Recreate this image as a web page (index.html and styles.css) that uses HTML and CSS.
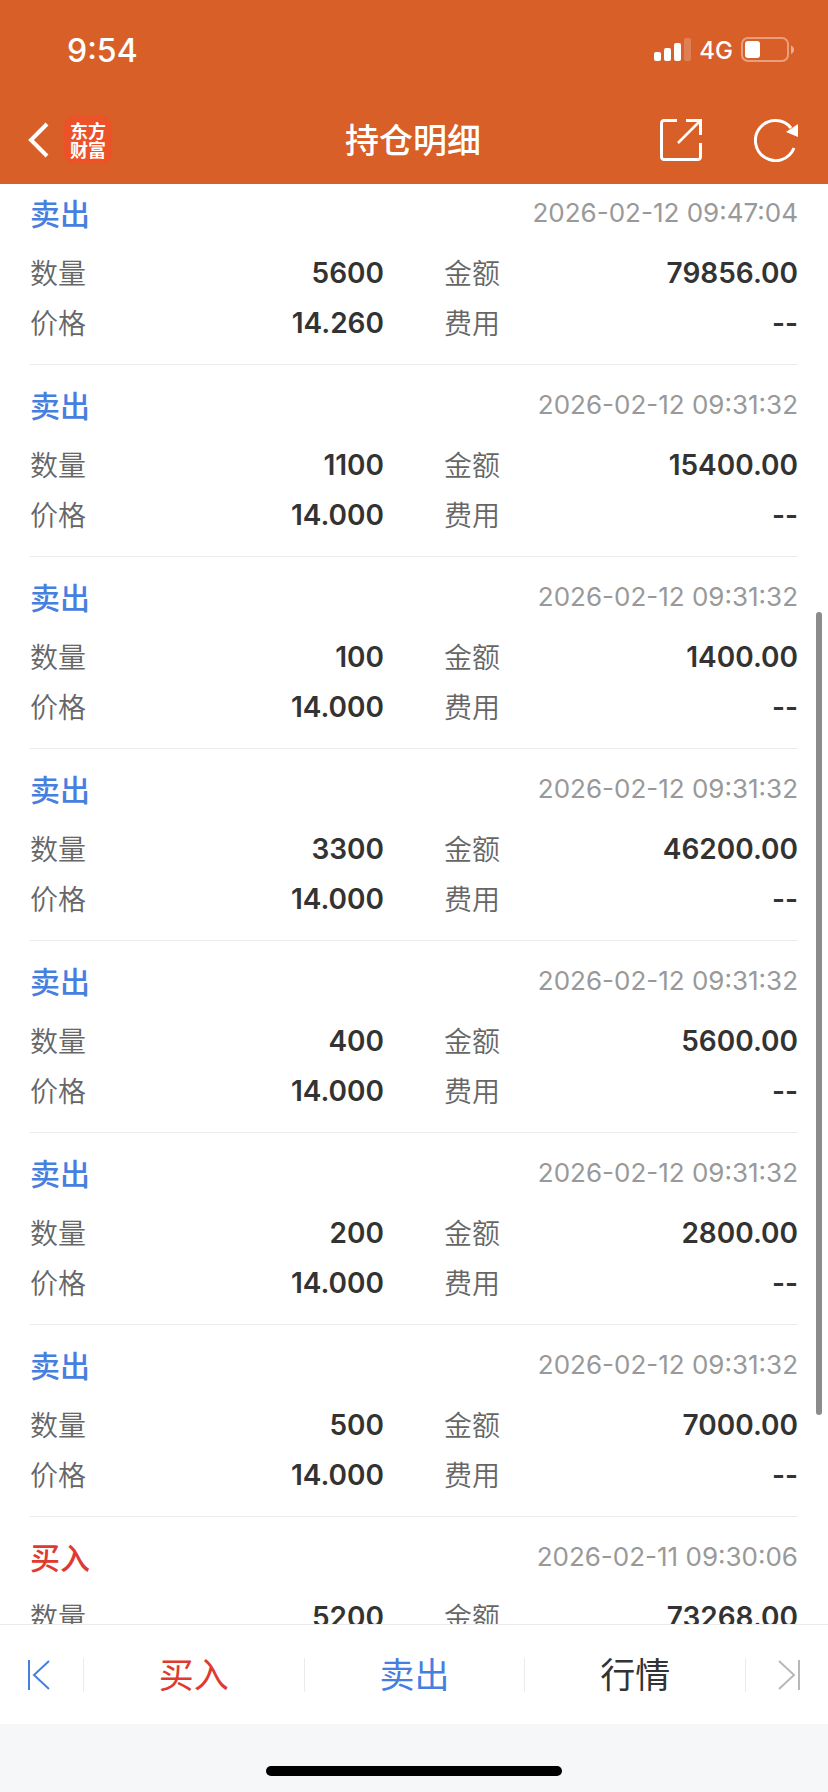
FILE: index.html
```html
<!DOCTYPE html>
<html lang="zh-CN">
<head>
    <meta charset="UTF-8">
    <meta name="viewport" content="width=device-width, initial-scale=1.0">
    <title>持仓明细</title>
    <link rel="stylesheet" href="styles.css">
</head>
<body>
    <header class="header">
        <div class="status-bar">
            <span class="time">9:54</span>
            <div class="status-icons">
                <svg width="37" height="24" viewBox="0 0 37 24" fill="#fff">
                    <rect x="0" y="14" width="7" height="9" rx="2"/>
                    <rect x="10" y="10" width="7" height="13" rx="2"/>
                    <rect x="20" y="5" width="7" height="18" rx="2"/>
                    <rect x="30" y="0" width="7" height="23" rx="2" opacity="0.2"/>
                </svg>
                <span class="network">4G</span>
                <svg width="54" height="26" viewBox="0 0 54 26">
                    <rect x="1" y="1" width="46" height="23" rx="6" fill="none" stroke="#fff" stroke-width="2" opacity="0.4"/>
                    <rect x="4" y="4" width="15" height="17" rx="3" fill="#fff"/>
                    <path d="M50 8.500c4 1.500 4 7 0 8.500z" fill="#fff" opacity="0.5"/>
                </svg>
            </div>
        </div>
        <nav class="nav-bar">
            <div class="nav-side">
                <button type="button" class="icon-btn" aria-label="返回">
                    <svg width="22" height="36" viewBox="0 0 22 36" fill="none" stroke="#fff" stroke-width="4">
                        <path d="M19 2L3 18l16 16"/>
                    </svg>
                </button>
                <a href="#" class="logo"><span>东方</span><span>财富</span></a>
            </div>
            <h1>持仓明细</h1>
            <div class="nav-side nav-right">
                <button type="button" class="icon-btn" aria-label="分享">
                    <svg width="42" height="42" viewBox="0 0 42 42" fill="none" stroke="#fff" stroke-width="3">
                        <path d="M17 1.500H4A2.500 2.500 0 0 0 1.500 4v34A2.500 2.500 0 0 0 4 40.500h34a2.500 2.500 0 0 0 2.500-2.500V24"/>
                        <path d="M26 1.500h14.500V16"/>
                        <path d="M40 2L18 24" stroke-width="2.500"/>
                    </svg>
                </button>
                <button type="button" class="icon-btn" aria-label="刷新">
                    <svg width="44" height="44" viewBox="0 0 44 44" fill="none" stroke="#fff" stroke-width="3">
                        <path d="M40 30A20 20 0 1 1 37 10"/>
                        <path d="M44 6v13L32 14z" fill="#fff" stroke="none"/>
                    </svg>
                </button>
            </div>
        </nav>
    </header>

    <main class="content">
        <ul class="trade-list" id="tradeList"></ul>
        <div class="scrollbar"></div>
    </main>

    <footer class="footer">
        <div class="toolbar">
            <button type="button" class="tool-side" aria-label="上一个">
                <svg width="22" height="30" viewBox="0 0 22 30" fill="none" stroke="#477fe0" stroke-width="2">
                    <path d="M1 0v30"/>
                    <path d="M21 1L6 15l15 14"/>
                </svg>
            </button>
            <button type="button" class="tool-btn buy">买入</button>
            <button type="button" class="tool-btn sell">卖出</button>
            <button type="button" class="tool-btn">行情</button>
            <button type="button" class="tool-side tool-next" aria-label="下一个">
                <svg width="22" height="30" viewBox="0 0 22 30" fill="none" stroke="#b8b8b8" stroke-width="2">
                    <path d="M21 0v30"/>
                    <path d="M1 1l15 14L1 29"/>
                </svg>
            </button>
        </div>
        <div class="home-area"><div class="home-indicator"></div></div>
    </footer>

    <script src="script.js"></script>
</body>
</html>
```
FILE: styles.css
```css
* {
    box-sizing: border-box;
}
body {
    display: flex;
    flex-direction: column;
    height: 100vh;
    margin: 0;
    overflow: hidden;
    font-family: Inter, "Noto Sans CJK SC", sans-serif;
    font-size: 28px;
    color: #333;
    background-color: #fff;
}
button {
    padding: 0;
    border: none;
    background: none;
    font-family: inherit;
    color: inherit;
    cursor: pointer;
}
svg {
    display: block;
}

/* header */
.header {
    flex: none;
    color: #fff;
    background-color: #d85f27;
}
.status-bar {
    display: flex;
    justify-content: space-between;
    align-items: center;
    height: 100px;
    padding: 0 33px 0 67px;
}
.time {
    font-size: 32px;
    font-weight: 500;
}
.status-icons {
    display: flex;
    align-items: center;
    gap: 8px;
}
.network {
    font-size: 24px;
    font-weight: 500;
}
.nav-bar {
    display: flex;
    align-items: center;
    height: 84px;
    padding: 0 30px 4px 28px;
}
.nav-side {
    display: flex;
    flex: 1;
    align-items: center;
    gap: 14px;
}
.nav-right {
    justify-content: flex-end;
    gap: 52px;
}
.nav-bar h1 {
    margin: 0;
    padding-bottom: 4px;
    font-size: 34px;
    font-weight: 500;
}
.logo {
    display: flex;
    flex-direction: column;
    align-items: center;
    justify-content: center;
    width: 48px;
    height: 48px;
    border-radius: 10px;
    background-color: #ec5228;
    color: #fff;
    font-family: "Noto Sans CJK SC", sans-serif;
    font-size: 18px;
    font-weight: 700;
    line-height: 19px;
    text-decoration: none;
}

/* trade list */
.content {
    position: relative;
    flex: 1;
    min-height: 0;
    overflow: hidden;
}
.trade-list {
    margin: 0;
    padding: 0 30px;
    list-style: none;
}
.trade {
    padding: 20px 0 16px;
    border-bottom: 1px solid #ebebeb;
}
.trade:first-child {
    padding-top: 9px;
}
.trade-head {
    display: flex;
    justify-content: space-between;
    align-items: center;
    height: 40px;
    margin-bottom: 15px;
}
.trade-type {
    padding-bottom: 3px;
    font-size: 30px;
    font-weight: 500;
}
.trade-time {
    padding-bottom: 1px;
    font-size: 26px;
    color: #999;
}
.trade-info {
    display: grid;
    grid-template-columns: 1fr 1fr;
    column-gap: 60px;
    margin: 0;
}
.trade-info div {
    display: flex;
    justify-content: space-between;
    align-items: center;
    height: 50px;
}
.trade-info dt {
    padding-bottom: 2px;
    font-weight: 350;
    color: #666;
}
.trade-info dd {
    margin: 0;
    font-weight: 600;
}
.buy {
    color: #e03a30;
}
.sell {
    color: #477fe0;
}
.scrollbar {
    position: absolute;
    top: 428px;
    right: 6px;
    width: 6px;
    height: 803px;
    border-radius: 3px;
    background-color: #8c8c8c;
}

/* footer */
.footer {
    flex: none;
    background-color: #f6f7f9;
}
.toolbar {
    display: flex;
    align-items: center;
    height: 100px;
    border-top: 1px solid #ebebeb;
    background-color: #fff;
}
.toolbar button {
    display: flex;
    align-items: center;
    height: 34px;
}
.toolbar button + button {
    border-left: 1px solid #ebebeb;
}
.tool-side {
    width: 83px;
    padding: 0 28px;
}
.tool-next {
    justify-content: flex-end;
}
.toolbar .tool-btn {
    flex: 1;
    justify-content: center;
    padding-bottom: 4px;
    font-size: 35px;
}
.home-area {
    height: 68px;
    padding-top: 42px;
}
.home-indicator {
    width: 296px;
    height: 10px;
    margin: 0 auto;
    border-radius: 5px;
    background-color: #000;
}
```
FILE: script.js
```js
const trades = [
    { type: "sell", time: "2026-02-12 09:47:04", count: "5600", amount: "79856.00", price: "14.260" },
    { type: "sell", time: "2026-02-12 09:31:32", count: "1100", amount: "15400.00", price: "14.000" },
    { type: "sell", time: "2026-02-12 09:31:32", count: "100", amount: "1400.00", price: "14.000" },
    { type: "sell", time: "2026-02-12 09:31:32", count: "3300", amount: "46200.00", price: "14.000" },
    { type: "sell", time: "2026-02-12 09:31:32", count: "400", amount: "5600.00", price: "14.000" },
    { type: "sell", time: "2026-02-12 09:31:32", count: "200", amount: "2800.00", price: "14.000" },
    { type: "sell", time: "2026-02-12 09:31:32", count: "500", amount: "7000.00", price: "14.000" },
    { type: "buy", time: "2026-02-11 09:30:06", count: "5200", amount: "73268.00", price: "14.090" }
];

document.getElementById("tradeList").innerHTML = trades.map(t => `
    <li class="trade">
        <div class="trade-head">
            <span class="trade-type ${t.type}">${t.type === "buy" ? "买入" : "卖出"}</span>
            <time class="trade-time">${t.time}</time>
        </div>
        <dl class="trade-info">
            <div><dt>数量</dt><dd>${t.count}</dd></div>
            <div><dt>金额</dt><dd>${t.amount}</dd></div>
            <div><dt>价格</dt><dd>${t.price}</dd></div>
            <div><dt>费用</dt><dd>--</dd></div>
        </dl>
    </li>`).join("");
```
